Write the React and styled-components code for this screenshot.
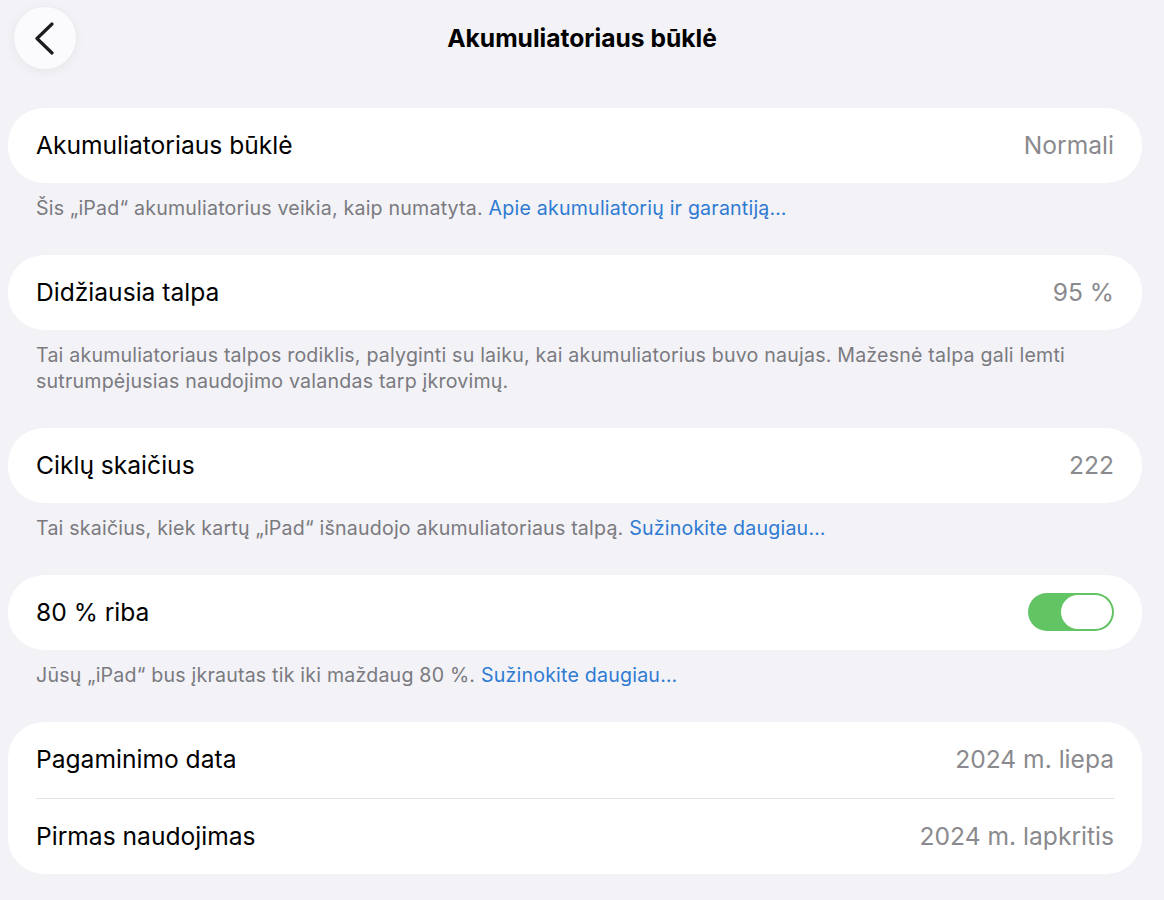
import styled, { createGlobalStyle } from 'styled-components';

const GlobalStyle = createGlobalStyle`
  html, body {
    margin: 0;
    padding: 0;
    background: #f2f2f7;
  }
  body {
    font-family: Inter, "Noto Sans", "Liberation Sans", sans-serif;
    -webkit-font-smoothing: antialiased;
  }
`;

const Page = styled.div`
  width: 1164px;
  height: 900px;
  box-sizing: border-box;
  padding: 0 22px 0 8px;
  overflow: hidden;
`;

const Header = styled.div`
  position: relative;
  height: 76px;
  display: flex;
  align-items: center;
  justify-content: center;
  margin-left: -8px;
  margin-right: -22px;
`;

const BackButton = styled.button`
  position: absolute;
  left: 14px;
  top: 7px;
  width: 62px;
  height: 62px;
  border-radius: 50%;
  border: none;
  background: #fbfbfd;
  box-shadow: 0 2px 12px rgba(0, 0, 0, 0.06);
  display: flex;
  align-items: center;
  justify-content: center;
  padding: 0;
  cursor: pointer;
`;

const Title = styled.h1`
  margin: 0;
  font-size: 24.6px;
  font-weight: 650;
  color: #000;
  letter-spacing: 0;
`;

const Sections = styled.div`
  display: flex;
  flex-direction: column;
  padding-top: 32px;
`;

const Section = styled.section`
  margin-bottom: ${(p) => (p.$last ? 0 : 34)}px;
`;

const Card = styled.div`
  background: #fff;
  border-radius: 36px;
  padding: 0 28px;
`;

const Row = styled.div`
  height: ${(p) => p.$h || 75}px;
  padding-bottom: 2px;
  display: flex;
  align-items: center;
  justify-content: space-between;
  border-top: ${(p) => (p.$divider ? '1px solid #e3e3e6' : 'none')};
  box-sizing: border-box;
`;

const Label = styled.span`
  font-size: 24.6px;
  color: #000;
  letter-spacing: 0;
`;

const Value = styled.span`
  font-size: 24.6px;
  color: #8a8a8e;
  letter-spacing: 0;
`;

const Footer = styled.p`
  margin: 12px 0 0;
  padding: 0 28px;
  font-size: 19.6px;
  line-height: 26px;
  color: #7a7a7f;
  letter-spacing: 0.2px;
`;

const Link = styled.a`
  color: #2f7bd2;
  text-decoration: none;
`;

const Toggle = styled.div`
  width: 86px;
  height: 38px;
  border-radius: 19px;
  background: ${(p) => (p.$on ? '#62c462' : '#e5e5ea')};
  display: flex;
  align-items: center;
  justify-content: ${(p) => (p.$on ? 'flex-end' : 'flex-start')};
  padding: 2px;
  box-sizing: border-box;
`;

const Knob = styled.div`
  width: 51px;
  height: 34px;
  border-radius: 17px;
  background: #fff;
`;

const Chevron = () => (
  <svg width="24" height="34" viewBox="0 0 24 34" fill="none">
    <path
      d="M19 3 L4 17.5 L19 32"
      stroke="#1c1c1e"
      strokeWidth="3.2"
      strokeLinecap="round"
      strokeLinejoin="round"
    />
  </svg>
);

export default function App() {
  return (
    <>
      <GlobalStyle />
      <Page>
        <Header>
          <BackButton aria-label="Atgal">
            <Chevron />
          </BackButton>
          <Title>Akumuliatoriaus būklė</Title>
        </Header>

        <Sections>
          <Section>
            <Card>
              <Row>
                <Label>Akumuliatoriaus būklė</Label>
                <Value>Normali</Value>
              </Row>
            </Card>
            <Footer>
              Šis „iPad“ akumuliatorius veikia, kaip numatyta.{' '}
              <Link href="#">Apie akumuliatorių ir garantiją…</Link>
            </Footer>
          </Section>

          <Section>
            <Card>
              <Row>
                <Label>Didžiausia talpa</Label>
                <Value>95 %</Value>
              </Row>
            </Card>
            <Footer>
              Tai akumuliatoriaus talpos rodiklis, palyginti su laiku, kai akumuliatorius buvo naujas. Mažesnė talpa gali lemti
              sutrumpėjusias naudojimo valandas tarp įkrovimų.
            </Footer>
          </Section>

          <Section>
            <Card>
              <Row>
                <Label>Ciklų skaičius</Label>
                <Value>222</Value>
              </Row>
            </Card>
            <Footer>
              Tai skaičius, kiek kartų „iPad“ išnaudojo akumuliatoriaus talpą.{' '}
              <Link href="#">Sužinokite daugiau…</Link>
            </Footer>
          </Section>

          <Section>
            <Card>
              <Row>
                <Label>80 % riba</Label>
                <Toggle $on>
                  <Knob />
                </Toggle>
              </Row>
            </Card>
            <Footer>
              Jūsų „iPad“ bus įkrautas tik iki maždaug 80 %.{' '}
              <Link href="#">Sužinokite daugiau…</Link>
            </Footer>
          </Section>

          <Section $last>
            <Card>
              <Row $h={76}>
                <Label>Pagaminimo data</Label>
                <Value>2024 m. liepa</Value>
              </Row>
              <Row $h={76} $divider>
                <Label>Pirmas naudojimas</Label>
                <Value>2024 m. lapkritis</Value>
              </Row>
            </Card>
          </Section>
        </Sections>
      </Page>
    </>
  );
}
